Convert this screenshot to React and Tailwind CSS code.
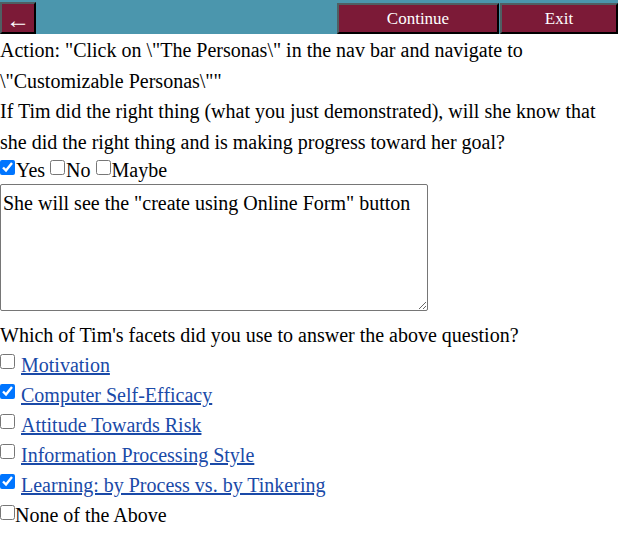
import React, { useState } from 'react';

const facets = [
    { name: 'Motivation', checked: false },
    { name: 'Computer Self-Efficacy', checked: true },
    { name: 'Attitude Towards Risk', checked: false },
    { name: 'Information Processing Style', checked: false },
    { name: 'Learning: by Process vs. by Tinkering', checked: true },
];

const btn = 'bg-[#7c1a37] text-white border-2 border-t-[#4f5f63] border-l-[#4f5f63] border-b-black border-r-black';
const serif = { fontFamily: '"Liberation Serif", "Times New Roman", serif' };

export default function App() {
    const [answer, setAnswer] = useState('yes');
    const [picked, setPicked] = useState(facets.map((f) => f.checked));
    const [none, setNone] = useState(false);
    const [text, setText] = useState('She will see the "create using Online Form" button');

    const toggle = (i) => setPicked((p) => p.map((v, j) => (j === i ? !v : v)));

    return (
        <div className="w-[618px] h-[538px] bg-white text-black text-[20px] leading-[30.5px]" style={serif}>
            {/* top bar */}
            <div className="flex items-end h-[34px] bg-[#4b96ad]">
                <button className={`${btn} w-[36px] h-[32px] flex items-center justify-center text-[24px] leading-none pt-[3px]`} style={serif}>
                    &larr;
                </button>
                <div className="flex-1" />
                <button className={`${btn} w-[162px] h-[31px] text-[17px] leading-none`} style={serif}>Continue</button>
                <button className={`${btn} w-[118px] h-[31px] ml-[1px] text-[17px] leading-none`} style={serif}>Exit</button>
            </div>

            <div className="pt-[1px]">
                <p>Action: "Click on \"The Personas\" in the nav bar and navigate to \"Customizable Personas\""</p>
                <p>If Tim did the right thing (what you just demonstrated), will she know that she did the right thing and is making progress toward her goal?</p>

                <div className="flex items-center h-[27px]">
                    {['Yes', 'No', 'Maybe'].map((opt, i) => (
                        <label key={opt} className={`flex items-center ${i > 0 ? 'ml-[5px]' : ''}`}>
                            <input
                                type="checkbox"
                                checked={answer === opt.toLowerCase()}
                                onChange={() => setAnswer(opt.toLowerCase())}
                                className="w-[15px] h-[15px] m-0 mr-[1px] mb-[6px]"
                            />
                            {opt}
                        </label>
                    ))}
                </div>

                <textarea
                    value={text}
                    onChange={(e) => setText(e.target.value)}
                    className="block w-[428px] h-[127px] border border-[#767676] rounded-[2px] px-[2px] pt-[6px] text-[20px] leading-[24px] outline-none resize"
                    style={serif}
                />

                <p className="mt-[9px]">Which of Tim's facets did you use to answer the above question?</p>

                {facets.map((f, i) => (
                    <div key={f.name} className="flex items-center h-[30px]">
                        <input
                            type="checkbox"
                            checked={picked[i]}
                            onChange={() => toggle(i)}
                            className="w-[15px] h-[15px] m-0 mr-[6px] mb-[8px]"
                        />
                        <a href="#" className="text-[#1a4aa8] underline">{f.name}</a>
                    </div>
                ))}
                <label className="flex items-center h-[30px]">
                    <input
                        type="checkbox"
                        checked={none}
                        onChange={() => setNone(!none)}
                        className="w-[15px] h-[15px] m-0 mb-[6px]"
                    />
                    None of the Above
                </label>
            </div>
        </div>
    );
}
